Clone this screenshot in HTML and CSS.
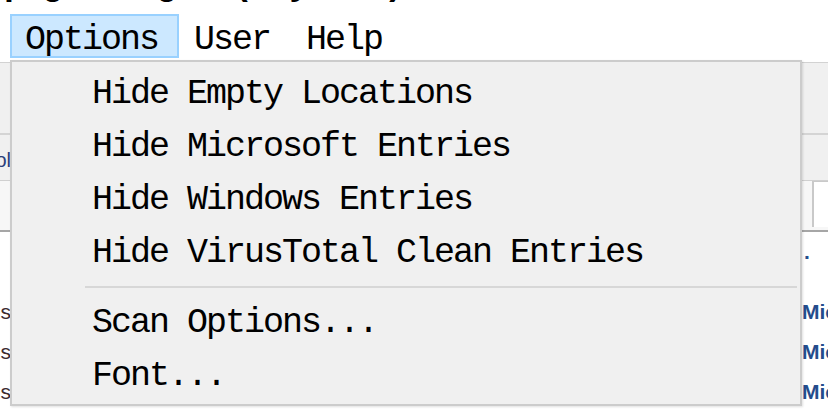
FILE: index.html
```html
<!DOCTYPE html>
<html lang="en">
<head>
    <meta charset="UTF-8">
    <title>Autoruns - Options menu</title>
    <link rel="stylesheet" href="styles.css">
</head>
<body>
    <div class="window">
        <div class="title-strip">
            <span class="title-text">pages log - (any_sid)</span>
        </div>

        <div class="menubar">
            <div class="menubar-item active">Options</div>
            <div class="menubar-item">User</div>
            <div class="menubar-item">Help</div>
        </div>

        <div class="app">
            <div class="toolbar"></div>

            <div class="tabs">
                <div class="tab-clip"><span>Winsock Protocol</span></div>
            </div>

            <div class="filter">
                <div class="filter-box"></div>
            </div>

            <div class="list">
                <div class="list-row group">
                    <div class="cell-left"></div>
                    <div class="cell-mid"></div>
                    <div class="cell-right dot">.</div>
                </div>
                <div class="list-row">
                    <div class="cell-left"><span>Windows Services</span></div>
                    <div class="cell-mid"></div>
                    <div class="cell-right">Microsoft Corporation</div>
                </div>
                <div class="list-row">
                    <div class="cell-left"><span>Windows Services</span></div>
                    <div class="cell-mid"></div>
                    <div class="cell-right">Microsoft Corporation</div>
                </div>
                <div class="list-row">
                    <div class="cell-left"><span>Windows Services</span></div>
                    <div class="cell-mid"></div>
                    <div class="cell-right">Microsoft Corporation</div>
                </div>
            </div>
        </div>

        <!-- dropdown of the Options menu, drawn over the window -->
        <div class="dropdown">
            <div class="dropdown-item">Hide Empty Locations</div>
            <div class="dropdown-item">Hide Microsoft Entries</div>
            <div class="dropdown-item">Hide Windows Entries</div>
            <div class="dropdown-item">Hide VirusTotal Clean Entries</div>
            <div class="dropdown-separator"></div>
            <div class="dropdown-item">Scan Options...</div>
            <div class="dropdown-item">Font...</div>
        </div>
    </div>
</body>
</html>
```

FILE: styles.css
```css
* {
    margin: 0;
    padding: 0;
    box-sizing: border-box;
}

body {
    width: 828px;
    height: 410px;
    overflow: hidden;
    background: #ffffff;
    font-family: "Liberation Mono", "Courier New", monospace;
    color: #000000;
}

.window {
    position: relative;
    width: 828px;
    height: 410px;
    overflow: hidden;
}

/* only the descenders of the caption line are visible */
.title-strip {
    height: 14px;
    overflow: hidden;
    padding-left: 4px;
}

.title-text {
    display: block;
    margin-top: -34px;
    font-size: 35px;
    line-height: 40px;
    letter-spacing: -2px;
    font-weight: bold;
    white-space: nowrap;
}

.menubar {
    display: flex;
    height: 48px;
    padding-left: 10px;
    background: #ffffff;
}

.menubar-item {
    height: 44px;
    padding: 9px 19px 0 13px;
    border: 2px solid transparent;
    font-size: 35px;
    line-height: 31px;
    letter-spacing: -2px;
    white-space: nowrap;
}

.menubar-item.active {
    background: #cce8ff;
    border-color: #99d1ff;
}

.app {
    font-family: "Liberation Sans", Arial, sans-serif;
}

.toolbar {
    height: 71px;
    background: #f0f0f0;
    border-top: 1px solid #d2d2d2;
}

.tabs {
    height: 47px;
    background: #f0f0f0;
    border-top: 2px solid #d4d4d4;
    padding-top: 14px;
}

.tab-clip {
    display: flex;
    justify-content: flex-end;
    width: 11px;
    overflow: hidden;
    white-space: nowrap;
    font-size: 20px;
    line-height: 22px;
    color: #2b3f7a;
}

.filter {
    height: 50px;
    background: #f7f7f7;
    border-top: 1px solid #d0d0d0;
    display: flex;
    justify-content: flex-end;
}

.filter-box {
    width: 16px;
    height: 46px;
    background: #ffffff;
    border-left: 2px solid #c9c9c9;
    border-top: 1px solid #c9c9c9;
}

.list {
    border-top: 2px solid #a6a6a6;
    background: #ffffff;
}

.list-row {
    display: grid;
    grid-template-columns: 11px 791px 1fr;
    height: 40px;
    line-height: 40px;
    font-size: 21px;
}

.list-row.group {
    height: 60px;
}

.cell-left {
    display: flex;
    justify-content: flex-end;
    overflow: hidden;
    white-space: nowrap;
    color: #3b2b30;
}

.cell-right {
    white-space: nowrap;
    overflow: hidden;
    color: #234c8c;
    font-weight: bold;
}

.cell-right.dot {
    padding-left: 2px;
}

.dropdown {
    position: absolute;
    left: 10px;
    top: 60px;
    width: 792px;
    height: 346px;
    background: #f0f0f0;
    border: 2px solid #cccccc;
    padding-top: 6px;
    box-shadow: 1px 1px 2px rgba(0, 0, 0, 0.12);
}

.dropdown-item {
    height: 53px;
    line-height: 53px;
    padding-left: 80px;
    font-size: 35px;
    letter-spacing: -2px;
    white-space: nowrap;
}

.dropdown-separator {
    height: 2px;
    margin: 6px 3px 9px 73px;
    background: #d7d7d7;
}
```
